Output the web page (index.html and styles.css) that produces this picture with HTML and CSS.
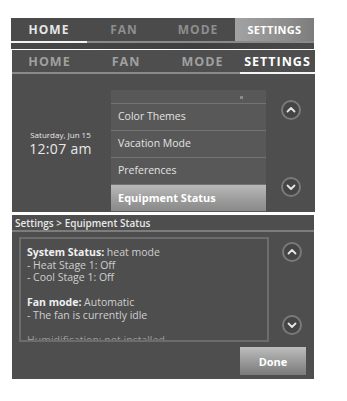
FILE: index.html
```html
<!DOCTYPE html>
<html lang="en">
<head>
	<meta charset="UTF-8">
	<title>Thermostat settings</title>
	<link rel="stylesheet" href="styles.css">
</head>
<body>
	<div class="page">
		<!-- top menu bar -->
		<div class="topbar">
			<div class="tabs tabs-top">
				<span class="tab on">HOME</span>
				<span class="tab">FAN</span>
				<span class="tab">MODE</span>
				<span class="tab sel">SETTINGS</span>
			</div>
			<div class="topbar-foot"></div>
		</div>

		<!-- settings menu -->
		<div class="panel menu-panel">
			<div class="tabs tabs-menu">
				<span class="tab">HOME</span>
				<span class="tab">FAN</span>
				<span class="tab">MODE</span>
				<span class="tab on">SETTINGS</span>
			</div>
			<div class="menu-body">
				<div class="clock">
					<div class="date">Saturday, Jun 15</div>
					<div class="time">12:07 am</div>
				</div>
				<div class="list">
					<div class="item part"><span class="tick"></span></div>
					<div class="item">Color Themes</div>
					<div class="item">Vacation Mode</div>
					<div class="item">Preferences</div>
					<div class="item active">Equipment Status</div>
				</div>
				<div class="scroll scroll-menu">
					<span class="circle">
						<svg width="12" height="12" viewBox="0 0 12 12"><path d="M2.5 7.5 L6 4 L9.5 7.5" fill="none" stroke="#e6e6e6" stroke-width="1.8" stroke-linecap="round" stroke-linejoin="round"/></svg>
					</span>
					<span class="circle">
						<svg width="12" height="12" viewBox="0 0 12 12"><path d="M2.5 4.5 L6 8 L9.5 4.5" fill="none" stroke="#e6e6e6" stroke-width="1.8" stroke-linecap="round" stroke-linejoin="round"/></svg>
					</span>
				</div>
			</div>
		</div>

		<!-- equipment status -->
		<div class="panel status-panel">
			<div class="crumb">Settings &gt; Equipment Status</div>
			<div class="status-body">
				<div class="box">
					<p><b>System Status:</b> heat mode</p>
					<p>- Heat Stage 1: Off</p>
					<p>- Cool Stage 1: Off</p>
					<p>&nbsp;</p>
					<p><b>Fan mode:</b> Automatic</p>
					<p>- The fan is currently idle</p>
					<p>&nbsp;</p>
					<p class="cut">Humidification: not installed</p>
				</div>
				<div class="scroll scroll-status">
					<span class="circle">
						<svg width="12" height="12" viewBox="0 0 12 12"><path d="M2.5 7.5 L6 4 L9.5 7.5" fill="none" stroke="#e6e6e6" stroke-width="1.8" stroke-linecap="round" stroke-linejoin="round"/></svg>
					</span>
					<span class="circle">
						<svg width="12" height="12" viewBox="0 0 12 12"><path d="M2.5 4.5 L6 8 L9.5 4.5" fill="none" stroke="#e6e6e6" stroke-width="1.8" stroke-linecap="round" stroke-linejoin="round"/></svg>
					</span>
				</div>
			</div>
			<div class="status-foot">
				<span class="done">Done</span>
			</div>
		</div>
	</div>
</body>
</html>
```

FILE: styles.css
```css
*{
	margin: 0;
	padding: 0;
	box-sizing: border-box;
}
body{
	background: #fff;
	font-family: "Open Sans", "DejaVu Sans", sans-serif;
	color: #e4e4e4;
}
.page{
	padding: 18px 0 0 11px;
}

/* tabs */
.tabs{
	display: grid;
}
.tab{
	display: flex;
	align-items: center;
	justify-content: center;
	font-weight: 700;
	letter-spacing: 1px;
	border-bottom: 2px solid #8a8a8a;
}
.tabs-top{
	grid-template-columns: 76px 74px 74px 79px;
}
.tabs-top .tab{
	height: 25px;
	font-size: 12px;
	color: #8e8e8e;
}
.tabs-top .tab.on{
	color: #e6e6e6;
	border-bottom-color: #f2f2f2;
}
.tabs-top .tab.sel{
	color: #fff;
	font-size: 11px;
	letter-spacing: 0.3px;
	background: linear-gradient(90deg, #a2a2a2, #8b8b8b 70%, #7c7c7c);
}
.topbar{
	width: 303px;
	background: #4b4b4b;
}
.topbar-foot{
	height: 6px;
	background: linear-gradient(90deg, #474747, #3f3f3f 60%, #4a4a4a);
}

/* panels */
.panel{
	margin-left: 1px;
	background: #4e4e4e;
	overflow: hidden;
}
.menu-panel{
	width: 303px;
	height: 162px;
	margin-top: 1px;
}
.tabs-menu{
	grid-template-columns: 75px 78px 75px 75px;
}
.tabs-menu .tab{
	height: 24px;
	font-size: 12.5px;
	color: #a0a0a0;
}
.tabs-menu .tab.on{
	color: #fff;
	border-bottom-color: #f4f4f4;
}

.menu-body{
	display: flex;
	height: 138px;
}
.clock{
	width: 99px;
	display: flex;
	flex-direction: column;
	align-items: center;
	justify-content: center;
	padding-right: 2px;
	padding-top: 2px;
	color: #e8e8e8;
}
.date{
	font-size: 8px;
	line-height: 10px;
}
.time{
	font-size: 14px;
	line-height: 18px;
	letter-spacing: 0.3px;
}
.list{
	width: 155px;
	margin-top: 16px;
	background: #585858;
}
.item{
	height: 27px;
	border-top: 1px solid #737373;
	padding-left: 7px;
	font-size: 10.5px;
	line-height: 25px;
	color: #e2e2e2;
}
.item.part{
	height: 13px;
	border-top: none;
	position: relative;
}
.tick{
	position: absolute;
	left: 129px;
	top: 6px;
	width: 3px;
	height: 3px;
	background: #8a8a8a;
}
.item.active{
	background: linear-gradient(180deg, #b9b9b9, #9a9a9a 60%, #8a8a8a);
	color: #fff;
	font-weight: 700;
	font-size: 11px;
}

/* scroll buttons */
.scroll{
	flex: 1;
	display: flex;
	flex-direction: column;
	align-items: center;
}
.scroll-menu{
	padding-top: 26px;
	gap: 57px;
}
.circle{
	width: 20px;
	height: 20px;
	border-radius: 50%;
	border: 2px solid #7a7a7a;
	background: #454545;
	display: flex;
	align-items: center;
	justify-content: center;
}

/* equipment status */
.status-panel{
	width: 302px;
	height: 164px;
	margin-top: 3px;
}
.crumb{
	height: 17px;
	border-bottom: 2px solid #7d7d7d;
	padding-left: 3px;
	font-size: 10px;
	font-weight: 600;
	line-height: 16px;
	color: #e8e8e8;
}
.status-body{
	display: flex;
	padding-top: 5px;
}
.box{
	width: 250px;
	height: 105px;
	margin-left: 7px;
	border: 2px solid #6c6c6c;
	padding: 7px 0 0 6px;
	overflow: hidden;
	font-size: 10.5px;
	line-height: 12.5px;
	color: #cfcfcf;
}
.box b{
	font-weight: 700;
	color: #f0f0f0;
}
.box .cut{
	color: #9a9a9a;
}
.scroll-status{
	padding-top: 5px;
	gap: 53px;
}
.status-foot{
	display: flex;
	justify-content: flex-end;
	padding: 5px 8px 0 0;
}
.done{
	width: 66px;
	height: 28px;
	display: flex;
	align-items: center;
	justify-content: center;
	background: linear-gradient(180deg, #bdbdbd, #9b9b9b 50%, #7a7a7a);
	color: #fff;
	font-size: 11px;
	font-weight: 700;
}
```
